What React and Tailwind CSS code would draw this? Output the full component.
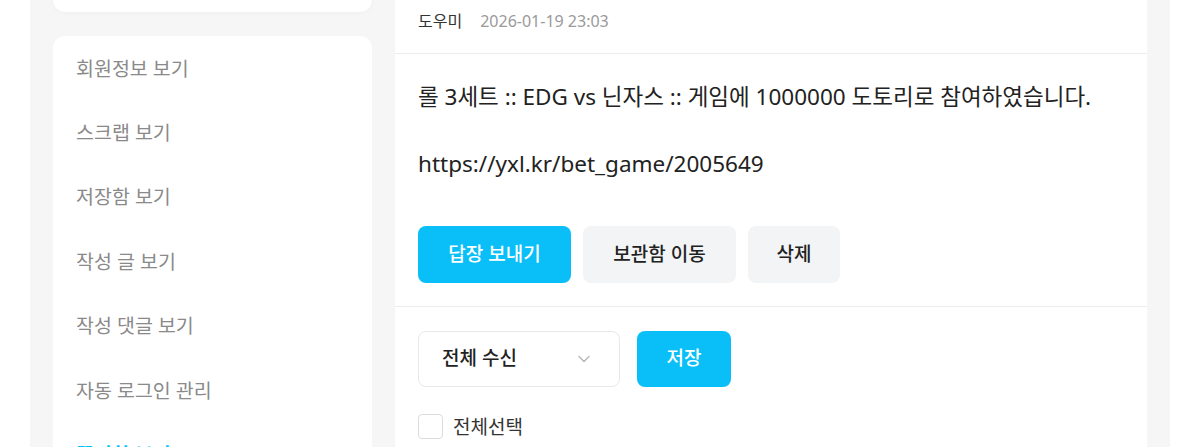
import { ChevronDown } from 'lucide-react';

const menu = [
  '회원정보 보기',
  '스크랩 보기',
  '저장함 보기',
  '작성 글 보기',
  '작성 댓글 보기',
  '자동 로그인 관리',
  '쪽지함 보기',
];

export default function App() {
  return (
    <div
      className="h-[447px] w-[1200px] overflow-hidden bg-white"
      style={{ fontFamily: '"Noto Sans", "Noto Sans CJK KR", sans-serif' }}
    >
      <div className="mx-[30px] -mt-[60px] flex gap-[23px] bg-[#f6f6f6] px-[23px]">
        {/* sidebar */}
        <aside className="flex w-[319px] shrink-0 flex-col gap-[24px]">
          <div className="h-[72px] rounded-xl bg-white shadow-[0_1px_4px_rgba(0,0,0,0.03)]" />
          <nav className="rounded-xl bg-white pb-4">
            {menu.map((m, i) => (
              <div
                key={m}
                className={`flex h-[64.4px] items-center px-[23px] text-[19.5px] ${
                  i === menu.length - 1 ? 'font-semibold text-[#0abff8]' : 'text-[#8a8a8a]'
                }`}
              >
                {m}
              </div>
            ))}
          </nav>
        </aside>

        {/* message panel */}
        <main className="w-[752px] shrink-0 bg-white">
          <div className="flex h-[114px] items-end gap-[18px] border-b border-[#ececec] px-[23px] pb-[20px] text-[16px]">
            <span className="text-[#333]">도우미</span>
            <span className="text-[#9a9a9a]">2026-01-19 23:03</span>
          </div>

          <div className="border-b border-[#ececec] px-[23px] pt-[26px] pb-[23px]">
            <p className="whitespace-pre-line text-[22.5px] leading-[33.5px] text-[#222]">
              {'롤 3세트 :: EDG vs 닌자스 :: 게임에 1000000 도토리로 참여하였습니다.\n\nhttps://yxl.kr/bet_game/2005649'}
            </p>
            <div className="mt-[45px] flex gap-[12px]">
              <button className="h-[57px] w-[153px] rounded-lg bg-[#0abff8] text-[19px] font-medium text-white">
                답장 보내기
              </button>
              <button className="h-[57px] w-[153px] rounded-lg bg-[#f2f4f6] text-[19px] font-medium text-[#222]">
                보관함 이동
              </button>
              <button className="h-[57px] w-[92px] rounded-lg bg-[#f2f4f6] text-[19px] font-medium text-[#222]">
                삭제
              </button>
            </div>
          </div>

          <div className="px-[23px] pt-[24px] pb-10">
            <div className="flex gap-[17px]">
              <div className="flex h-[56px] w-[202px] items-center justify-between rounded-lg border border-[#e8e8e8] pr-[25px] pl-[23px]">
                <span className="text-[19px] font-medium text-[#222]">전체 수신</span>
                <ChevronDown className="h-5 w-5 text-[#b5b5b5]" strokeWidth={1.5} />
              </div>
              <button className="h-[56px] w-[94px] rounded-lg bg-[#0abff8] text-[19px] font-medium text-white">
                저장
              </button>
            </div>
            <label className="mt-[26px] flex items-center gap-[10px]">
              <span className="h-[25px] w-[25px] rounded border border-[#dcdcdc] bg-white" />
              <span className="text-[19px] text-[#333]">전체선택</span>
            </label>
          </div>
        </main>
      </div>
    </div>
  );
}
